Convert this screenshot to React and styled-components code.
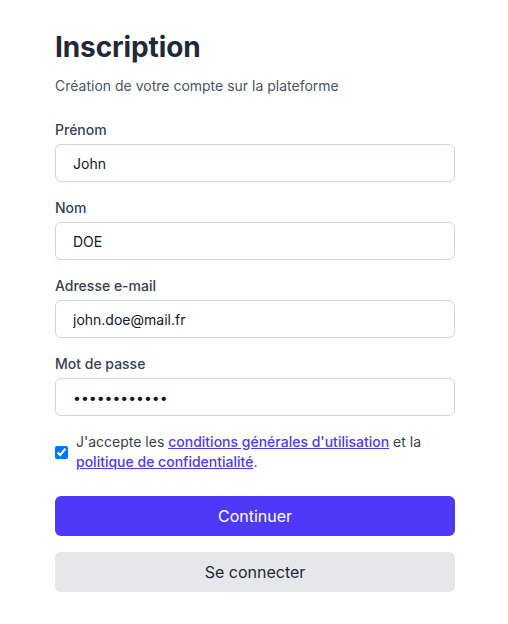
import React from "react";
import styled, { createGlobalStyle } from "styled-components";

const Global = createGlobalStyle`
  * { box-sizing: border-box; }
  body { margin: 0; background: #ffffff; font-family: Inter, "Noto Sans", sans-serif; }
`;

const Page = styled.div`
  display: flex;
  padding: 29px 53px 32px 55px;
`;

const Form = styled.form`
  width: 400px;
  display: flex;
  flex-direction: column;
`;

const Title = styled.h1`
  margin: 0;
  font-size: 28px;
  line-height: 36px;
  font-weight: 700;
  color: #1e2939;
  letter-spacing: -0.1px;
`;

const Subtitle = styled.p`
  margin: 11px 0 24px;
  font-size: 14px;
  line-height: 20px;
  color: #4a5565;
`;

const Field = styled.div`
  display: flex;
  flex-direction: column;
  gap: 4px;
  margin-bottom: 16px;
`;

const Label = styled.label`
  font-size: 14px;
  line-height: 20px;
  font-weight: 500;
  color: #364153;
`;

const Input = styled.input`
  height: 38px;
  padding: 0 16px 0 17px;
  border: 1px solid #d1d5dc;
  border-radius: 6px;
  font-family: inherit;
  font-size: 14px;
  color: #101828;
  background: #fff;
  outline: none;
`;

const Terms = styled.div`
  display: flex;
  align-items: center;
  gap: 8px;
  margin-bottom: 24px;
`;

const Check = styled.input`
  margin: 0;
  width: 13px;
  height: 13px;
  flex: none;
`;

const TermsText = styled.label`
  font-size: 14px;
  line-height: 20px;
  color: #364153;
`;

const Link = styled.a`
  color: #4f39f6;
  font-weight: 500;
  text-decoration: underline;
`;

const Button = styled.button`
  height: 40px;
  width: 100%;
  border: none;
  border-radius: 6px;
  font-family: inherit;
  font-size: 16px;
  cursor: pointer;
  background: ${(p) => (p.$variant === "primary" ? "#4f39f6" : "#e5e7eb")};
  color: ${(p) => (p.$variant === "primary" ? "#ffffff" : "#1e2939")};
  margin-bottom: ${(p) => (p.$variant === "primary" ? "16px" : "0")};
`;

export default function App() {
  return (
    <>
      <Global />
      <Page>
        <Form onSubmit={(e) => e.preventDefault()}>
          <Title>Inscription</Title>
          <Subtitle>Création de votre compte sur la plateforme</Subtitle>
          <Field>
            <Label htmlFor="prenom">Prénom</Label>
            <Input id="prenom" type="text" defaultValue="John" />
          </Field>
          <Field>
            <Label htmlFor="nom">Nom</Label>
            <Input id="nom" type="text" defaultValue="DOE" />
          </Field>
          <Field>
            <Label htmlFor="email">Adresse e-mail</Label>
            <Input id="email" type="email" defaultValue="john.doe@mail.fr" />
          </Field>
          <Field>
            <Label htmlFor="pwd">Mot de passe</Label>
            <Input id="pwd" type="password" defaultValue="motdepasse12" />
          </Field>
          <Terms>
            <Check id="cgu" type="checkbox" defaultChecked />
            <TermsText htmlFor="cgu">
              J'accepte les <Link href="#">conditions générales d'utilisation</Link> et la{" "}
              <Link href="#">politique de confidentialité</Link>.
            </TermsText>
          </Terms>
          <Button type="submit" $variant="primary">Continuer</Button>
          <Button type="button" $variant="secondary">Se connecter</Button>
        </Form>
      </Page>
    </>
  );
}
